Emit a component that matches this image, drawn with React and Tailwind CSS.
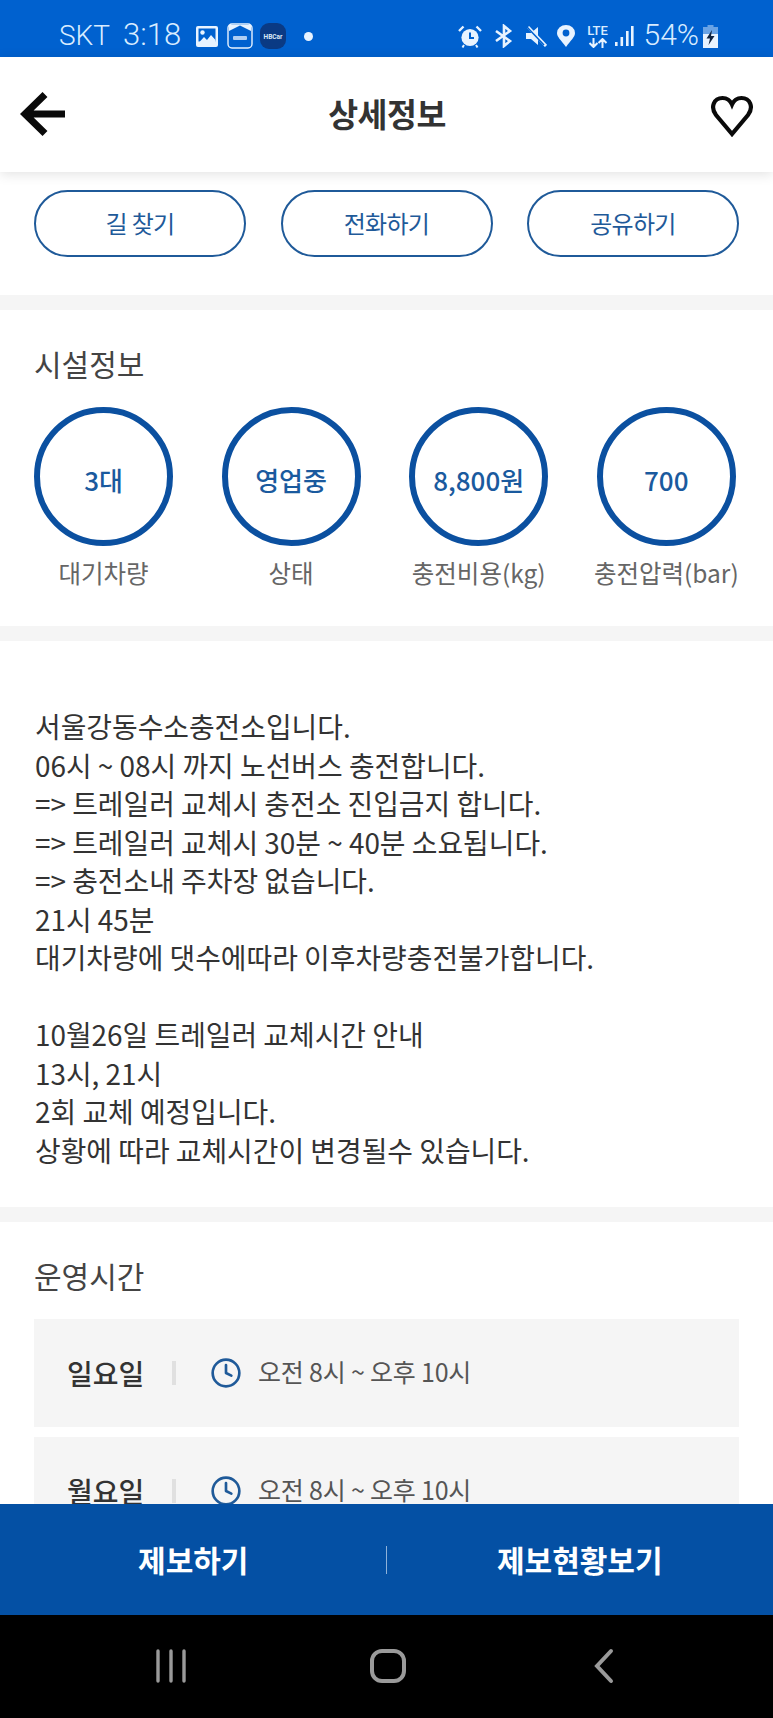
import { Clock } from "lucide-react";

const FONT = "font-['Noto_Sans_CJK_KR','Noto_Sans',sans-serif]";

const stats = [
  { value: "3대", label: "대기차량" },
  { value: "영업중", label: "상태" },
  { value: "8,800원", label: "충전비용(kg)" },
  { value: "700", label: "충전압력(bar)" },
];

const notice = [
  "서울강동수소충전소입니다.",
  "06시 ~ 08시 까지 노선버스 충전합니다.",
  "=> 트레일러 교체시 충전소 진입금지 합니다.",
  "=> 트레일러 교체시 30분 ~ 40분 소요됩니다.",
  "=> 충전소내 주차장 없습니다.",
  "21시 45분",
  "대기차량에 댓수에따라 이후차량충전불가합니다.",
  "",
  "10월26일 트레일러 교체시간 안내",
  "13시, 21시",
  "2회 교체 예정입니다.",
  "상황에 따라 교체시간이 변경될수 있습니다.",
];

function StatusBar() {
  return (
    <div className="h-[57px] shrink-0 bg-[#0061cf] flex items-center text-[#d9ecff] pt-[15px]">
      <span className="ml-[59px] w-[52px] text-[28px] leading-none font-['Roboto',sans-serif] font-light">SKT</span>
      <span className="ml-[12px] w-[61px] -mt-[3px] text-[31px] leading-none font-['Roboto',sans-serif] font-light">3:18</span>
      {/* gallery */}
      <svg className="ml-[12px]" width="22" height="21" viewBox="0 0 22 21">
        <rect width="22" height="21" rx="2" fill="#e8f3ff" />
        <rect x="2.5" y="2.5" width="17" height="13" fill="#0061cf" />
        <circle cx="6.5" cy="6.5" r="2.2" fill="#e8f3ff" />
        <path d="M2.5 17 L8 11 L11 14 L15 9 L19.5 14 V18 H2.5 Z" fill="#e8f3ff" />
      </svg>
      {/* app notification icons */}
      <svg className="ml-[9px]" width="26" height="26" viewBox="0 0 26 26">
        <rect x="1" y="1" width="24" height="24" rx="4" fill="#0061cf" stroke="#e8f3ff" strokeWidth="1.4" />
        <path d="M2 8 L13 2.5 L24 8 V2 H2 Z" fill="#e8f3ff" />
        <rect x="6" y="13" width="14" height="4" rx="1" fill="#e8f3ff" opacity="0.75" />
      </svg>
      <svg className="ml-[7px]" width="26" height="26" viewBox="0 0 26 26">
        <rect width="26" height="26" rx="9" fill="#0a3a84" />
        <text x="13" y="15.5" textAnchor="middle" fontSize="6.5" fontWeight="700" fill="#dbe8f7" fontFamily="Roboto, sans-serif">HBCar</text>
      </svg>
      <span className="ml-[18px] w-[9px] h-[9px] rounded-full bg-[#e8f3ff]" />
      <div className="ml-auto mr-[55px] flex items-center">
        {/* alarm */}
        <svg width="24" height="23" viewBox="0 0 24 23">
          <circle cx="12" cy="12.5" r="8.6" fill="#e8f3ff" />
          <path d="M12 7.5 V13 H16" fill="none" stroke="#0061cf" strokeWidth="2" />
          <path d="M1 6 L5.5 1.5 M23 6 L18.5 1.5" stroke="#e8f3ff" strokeWidth="2.4" />
          <path d="M6 20 L4.5 22.5 M18 20 L19.5 22.5" stroke="#e8f3ff" strokeWidth="2" />
        </svg>
        {/* bluetooth */}
        <svg className="ml-[12px]" width="20" height="24" viewBox="0 0 20 24">
          <path d="M2 7 L16 17 L10 22 V2 L16 7 L2 17" fill="none" stroke="#e8f3ff" strokeWidth="2.6" />
        </svg>
        {/* mute */}
        <svg className="ml-[11px]" width="22" height="22" viewBox="0 0 22 22">
          <path d="M1 8 H6 L13 2 V20 L6 14 H1 Z" fill="#e8f3ff" />
          <path d="M3 2 L21 21" stroke="#e8f3ff" strokeWidth="3" />
          <path d="M1 1 L19 20" stroke="#0061cf" strokeWidth="1.5" />
        </svg>
        {/* location */}
        <svg className="ml-[10px]" width="18" height="22" viewBox="0 0 18 22">
          <path d="M9 22 C4 15 0 12 0 8 A9 8 0 0 1 18 8 C18 12 14 15 9 22 Z" fill="#e8f3ff" />
          <circle cx="9" cy="8" r="3.4" fill="#0061cf" />
        </svg>
        {/* lte */}
        <div className="ml-[12px] flex flex-col items-center w-[22px]">
          <span className="font-['Roboto',sans-serif] font-medium text-[13px] leading-[12px]">LTE</span>
          <svg className="mt-[1px]" width="20" height="10" viewBox="0 0 20 10">
            <path d="M5.5 0 V9 M1.5 5 L5.5 9 L9.5 5 M14.5 10 V1 M10.5 5 L14.5 1 L18.5 5" fill="none" stroke="#e8f3ff" strokeWidth="2" />
          </svg>
        </div>
        {/* signal */}
        <svg className="ml-[6px]" width="19" height="22" viewBox="0 0 19 22">
          <rect x="0" y="17" width="2.6" height="4" fill="#e8f3ff" />
          <rect x="5.5" y="12" width="2.6" height="9" fill="#e8f3ff" />
          <rect x="11" y="6" width="2.6" height="15" fill="#e8f3ff" />
          <rect x="16" y="1" width="2.6" height="20" fill="#e8f3ff" />
        </svg>
        <span className="ml-[10px] text-[30px] leading-none -mt-[2px] font-['Roboto',sans-serif] font-light">54%</span>
        {/* battery */}
        <svg className="ml-[4px]" width="15" height="23" viewBox="0 0 15 23">
          <path d="M4.5 0 H10.5 V2 H15 V23 H0 V2 H4.5 Z" fill="#e8f3ff" opacity="0.45" />
          <rect y="9" width="15" height="14" fill="#e8f3ff" />
          <path d="M9 5 L3.5 13.5 H7 L5.5 20 L11.5 11 H8 Z" fill="#10233f" />
        </svg>
      </div>
    </div>
  );
}

function Header() {
  return (
    <div className="relative z-10 h-[115px] shrink-0 bg-white shadow-[0_2px_12px_rgba(0,0,0,0.12)] flex items-center justify-between pl-[20px] pr-[19px] pb-[2px]">
      <svg width="46" height="46" viewBox="0 0 46 46">
        <path d="M45 23 H6 M25 3.5 L5 23 L25 42.5" fill="none" stroke="#0a0a0a" strokeWidth="7" />
      </svg>
      <h1 className="text-[32.5px] leading-none font-bold text-[#333] tracking-[-0.5px]">상세정보</h1>
      <svg className="mt-[5px]" width="46" height="42" viewBox="0 0 46 42">
        <path
          d="M24 39 L8 20 C2 12 6 3 14.5 3 C19 3 22 5 24 9.5 C26 5 29 3 33.5 3 C42 3 46 12 40 20 Z"
          fill="none"
          stroke="#0a0a0a"
          strokeWidth="4.2"
        />
      </svg>
    </div>
  );
}

export default function App() {
  return (
    <div className={`${FONT} w-[773px] h-[1718px] flex flex-col overflow-hidden bg-white`}>
      <StatusBar />
      <Header />

      <div className="flex-1 min-h-0 overflow-hidden">
        {/* action buttons */}
        <div className="flex justify-between px-[34px] pt-[18px] pb-[38px] border-b-[15px] border-[#f5f5f5]">
          {["길 찾기", "전화하기", "공유하기"].map((label) => (
            <button
              key={label}
              className="w-[212px] h-[67px] pb-[2px] rounded-full border-[2.5px] border-[#1f5a99] text-[24px] tracking-[-0.7px] text-[#1f5a99]"
            >
              {label}
            </button>
          ))}
        </div>

        {/* facility info */}
        <div className="px-[34px] pt-[33px] pb-[35px] border-b-[15px] border-[#f5f5f5]">
          <h2 className="text-[30px] leading-[40px] text-[#444]">시설정보</h2>
          <div className="mt-[24px] flex gap-[48.6px]">
            {stats.map((s) => (
              <div key={s.label} className="w-[139px] flex flex-col items-center">
                <div className="w-[139px] h-[139px] rounded-full border-[6px] border-[#0b50a0] flex items-center justify-center pt-[5px] text-[26px] font-medium text-[#1a5a9e]">
                  {s.value}
                </div>
                <span className="mt-[9px] text-[24.5px] leading-[36px] text-[#666] whitespace-nowrap">{s.label}</span>
              </div>
            ))}
          </div>
        </div>

        {/* notice */}
        <div className="px-[35px] pt-[66px] pb-[38px] border-b-[15px] border-[#f5f5f5] text-[27.9px] text-[#333]">
          {notice.map((line, i) => (
            <div key={i} className="h-[38.5px] leading-[38.5px] whitespace-nowrap">{line}</div>
          ))}
        </div>

        {/* opening hours */}
        <div className="px-[34px] pt-[31px]">
          <h2 className="text-[30px] leading-[44px] text-[#444]">운영시간</h2>
          <div className="mt-[22px] flex flex-col gap-[10px]">
            {["일요일", "월요일"].map((day) => (
              <div key={day} className="h-[108px] shrink-0 bg-[#f5f5f5] flex items-center pl-[33px]">
                <span className="w-[80px] text-[28px] font-medium text-[#333] whitespace-nowrap">{day}</span>
                <span className="ml-[25px] w-[4px] h-[24px] bg-[#e0e0e0]" />
                <Clock className="ml-[34px] text-[#1f5a99]" size={32} strokeWidth={2} />
                <span className="ml-[16px] pb-[2px] text-[25px] text-[#555] tracking-[-0.2px] whitespace-nowrap">오전 8시 ~ 오후 10시</span>
              </div>
            ))}
          </div>
        </div>
      </div>

      {/* bottom actions */}
      <div className="h-[111px] shrink-0 bg-[#0450a4] flex items-center text-white text-[30px] font-bold">
        <span className="flex-1 text-center">제보하기</span>
        <span className="w-px h-[28px] bg-[#8fb2d9] -ml-[1px]" />
        <span className="flex-1 text-center">제보현황보기</span>
      </div>

      {/* system nav */}
      <div className="h-[103px] shrink-0 bg-black flex items-center pl-[154px] pb-[2px]">
        <svg width="34" height="34" viewBox="0 0 34 34">
          <path d="M4 2 V32 M17 2 V32 M30 2 V32" stroke="#9a9a9a" strokeWidth="3.4" strokeLinecap="round" />
        </svg>
        <svg className="ml-[182px]" width="36" height="36" viewBox="0 0 36 36">
          <rect x="2" y="3" width="32" height="30" rx="10" fill="none" stroke="#9a9a9a" strokeWidth="4" />
        </svg>
        <svg className="ml-[187px]" width="22" height="36" viewBox="0 0 22 36">
          <path d="M18 3 L4 18 L18 33" fill="none" stroke="#9a9a9a" strokeWidth="4" strokeLinecap="round" />
        </svg>
      </div>
    </div>
  );
}
